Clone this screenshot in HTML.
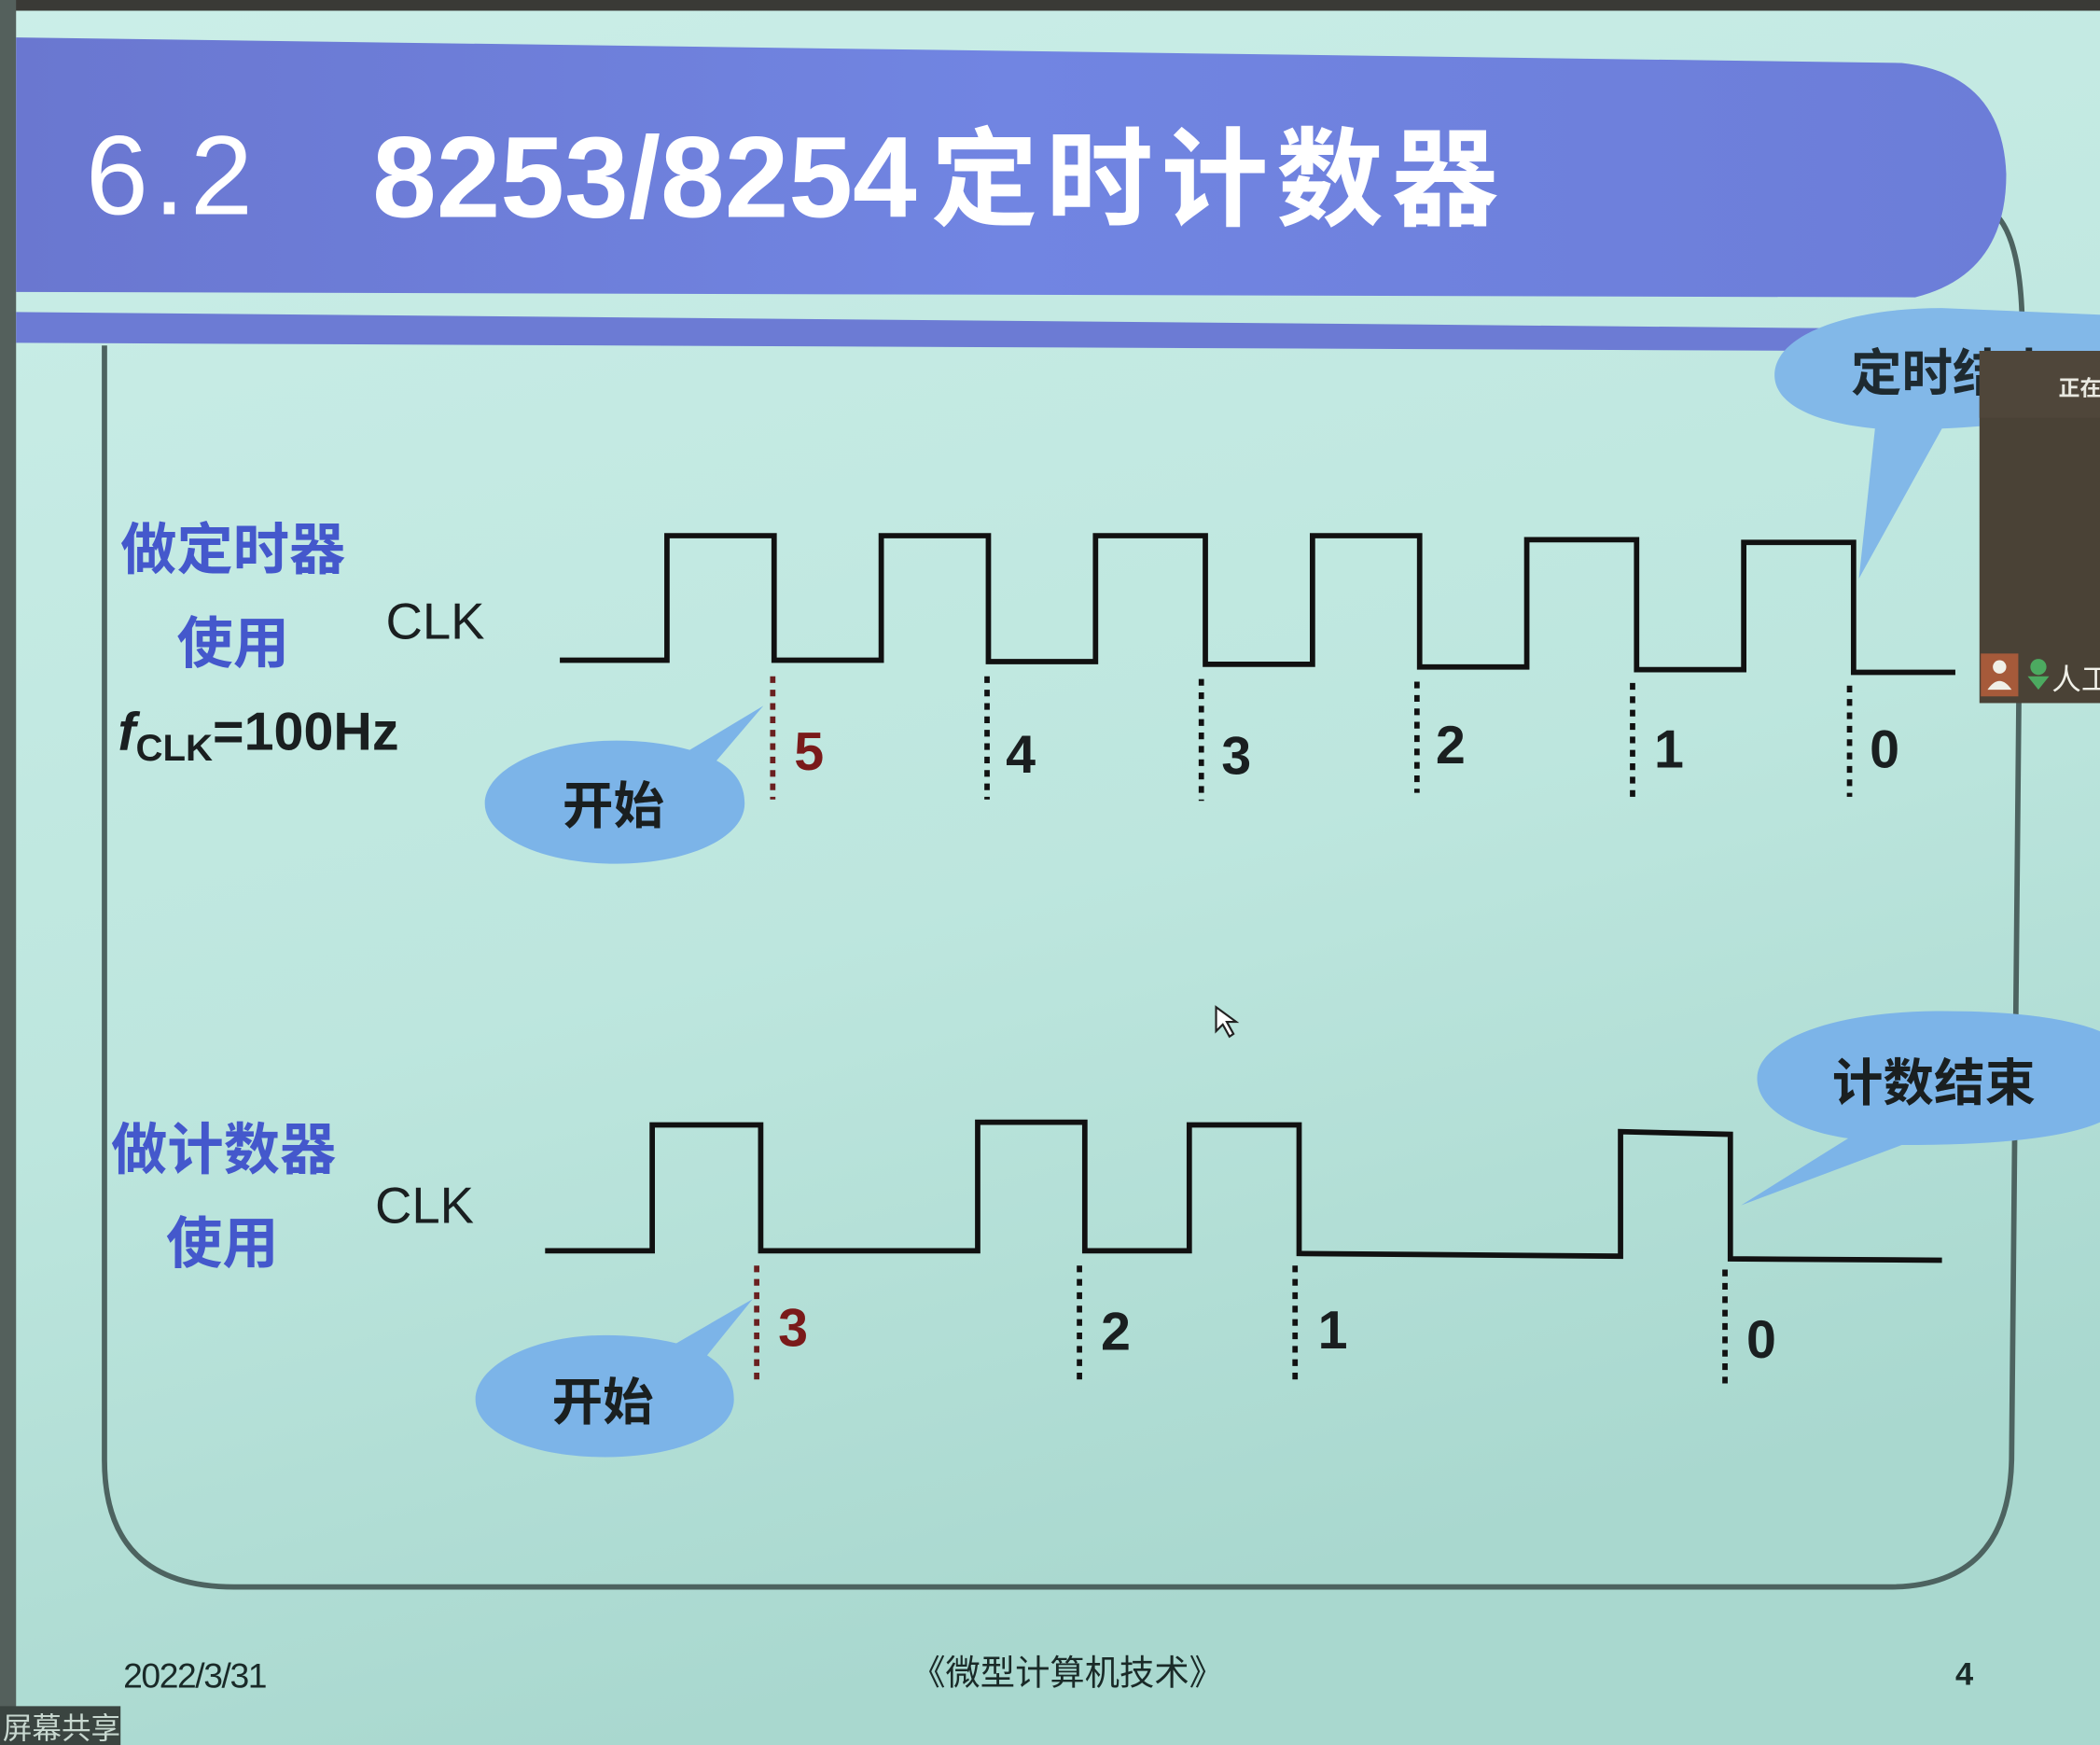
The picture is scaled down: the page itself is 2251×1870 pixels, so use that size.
<!DOCTYPE html>
<html><head><meta charset="utf-8"><style>
html,body{margin:0;padding:0;width:2251px;height:1870px;overflow:hidden;background:#c2e8e1}
svg{display:block}
text{font-family:"Liberation Sans","Noto Sans CJK SC",sans-serif}
</style></head><body>
<svg width="2251" height="1870" viewBox="0 0 1568 1303" preserveAspectRatio="none" xmlns="http://www.w3.org/2000/svg">
<defs>
<linearGradient id="bg" x1="0" y1="0" x2="0.3" y2="1">
<stop offset="0" stop-color="#cbeee8"/><stop offset="0.6" stop-color="#bde6de"/><stop offset="1" stop-color="#a9d8cf"/>
</linearGradient>
<linearGradient id="tb" x1="0" y1="0" x2="1" y2="0">
<stop offset="0" stop-color="#6a77d0"/><stop offset="0.5" stop-color="#7185e2"/><stop offset="1" stop-color="#6c7dd8"/>
</linearGradient>
</defs>
<rect width="1568" height="1303" fill="url(#bg)"/>
<rect x="0" y="0" width="1568" height="8" fill="#3a3a36"/>
<rect x="0" y="0" width="12" height="1303" fill="#54605c"/>
<path d="M78 258 L78 1090 Q78 1185 175 1185 L1410 1185 Q1500 1185 1502 1090 L1510 250 Q1510 180 1490 160" fill="none" stroke="#4d6360" stroke-width="4"/>
<path d="M12 28 L1420 47 Q1495 55 1498 130 Q1498 205 1430 222 L12 218 Z" fill="url(#tb)"/>
<path d="M12 233 L1360 245 L1360 262 L12 256 Z" fill="#6c7bd4"/>
<text x="64" y="160" font-family="Liberation Mono,monospace" font-size="84" fill="#fff" letter-spacing="4">6.2</text>
<text x="278" y="162" font-size="86" font-weight="bold" fill="#fff" letter-spacing="0">8253/8254</text>
<text x="695" y="162" font-size="80" fill="#fff" font-weight="bold" letter-spacing="6" font-family="Noto Sans CJK SC,sans-serif">定时计数器</text>
<path d="M1450 230 C1380 230 1325 250 1325 280 C1325 300 1350 315 1400 320 L1388 432 L1450 320 Q1568 315 1568 280 L1568 235 Z" fill="#82b8e8"/>
<text x="1382" y="292" font-size="38" font-weight="bold" fill="#1e2a30">定时结束</text>
<rect x="1478" y="262" width="90" height="263" fill="#4a4236"/>
<rect x="1478" y="262" width="90" height="50" fill="#4f463a"/>
<text x="1537" y="295" font-size="16" font-weight="bold" fill="#e8e8e0">正在</text>
<rect x="1479" y="488" width="28" height="32" fill="#a65a3a"/>
<circle cx="1493" cy="498" r="5" fill="#f0f0e8"/><path d="M1484 515 Q1493 502 1502 515 Z" fill="#f0f0e8"/>
<path d="M1514 505 L1530 505 L1522 515 Z" fill="#4caa60"/><circle cx="1522" cy="498" r="6" fill="#4caa60"/>
<text x="1532" y="515" font-size="22" fill="#f0f0e8">人工</text>
<text x="90" y="425" font-size="42" font-weight="bold" fill="#4458cc">做定时器</text>
<text x="132" y="495" font-size="42" font-weight="bold" fill="#4458cc">使用</text>
<text x="288" y="477" font-size="38" fill="#1a1f20">CLK</text>
<text x="88" y="560" font-size="40" font-weight="bold" fill="#1a1f20"><tspan font-style="italic">f</tspan><tspan font-size="28" dy="8">CLK</tspan><tspan dy="-8">=100Hz</tspan></text>
<polyline points="418,493 498,493 498,400 578,400 578,493 658,493 658,400 738,400 738,494 818,494 818,400 900,400 900,496 980,496 980,400 1060,400 1060,498 1140,498 1140,403 1222,403 1222,500 1302,500 1302,405 1384,405 1384,502 1460,502" fill="none" stroke="#111" stroke-width="4"/>
<g stroke="#111" stroke-width="4" stroke-dasharray="5 5">
<line x1="577" y1="505" x2="577" y2="597" stroke="#6a2020"/>
<line x1="737" y1="505" x2="737" y2="597"/><line x1="897" y1="507" x2="897" y2="598"/>
<line x1="1058" y1="509" x2="1058" y2="592"/><line x1="1219" y1="510" x2="1219" y2="595"/>
<line x1="1381" y1="512" x2="1381" y2="595"/>
</g>
<g font-size="40" font-weight="bold" fill="#1a1f20">
<text x="593" y="575" fill="#7a1a1a">5</text><text x="751" y="577">4</text><text x="912" y="578">3</text>
<text x="1072" y="570">2</text><text x="1235" y="573">1</text><text x="1396" y="573">0</text>
</g>
<path d="M460 553 C405 553 362 575 362 600 C362 625 405 645 460 645 C515 645 556 625 556 600 C556 585 548 575 535 568 L570 527 L515 560 Q490 553 460 553 Z" fill="#7cb4e8"/>
<text x="420" y="615" font-size="38" font-weight="bold" fill="#1a1f20">开始</text>
<path d="M908 752 L908 770 L913 765 L918 774 L921 772 L916 763 L923 763 Z" fill="#fff" stroke="#222" stroke-width="1.5"/>
<text x="83" y="873" font-size="42" font-weight="bold" fill="#4458cc">做计数器</text>
<text x="124" y="943" font-size="42" font-weight="bold" fill="#4458cc">使用</text>
<text x="280" y="913" font-size="38" fill="#1a1f20">CLK</text>
<polyline points="407,934 487,934 487,840 568,840 568,934 730,934 730,838 810,838 810,934 888,934 888,840 970,840 970,936 1210,938 1210,845 1292,847 1292,940 1450,941" fill="none" stroke="#111" stroke-width="4"/>
<g stroke="#111" stroke-width="4" stroke-dasharray="5 5">
<line x1="565" y1="945" x2="565" y2="1030" stroke="#6a2020"/>
<line x1="806" y1="945" x2="806" y2="1030"/><line x1="967" y1="945" x2="967" y2="1030"/>
<line x1="1288" y1="948" x2="1288" y2="1035"/>
</g>
<g font-size="40" font-weight="bold" fill="#1a1f20">
<text x="581" y="1005" fill="#7a1a1a">3</text><text x="822" y="1008">2</text><text x="984" y="1007">1</text><text x="1304" y="1014">0</text>
</g>
<path d="M452 997 C397 997 355 1020 355 1045 C355 1070 397 1088 452 1088 C507 1088 548 1070 548 1045 C548 1030 540 1020 528 1012 L562 970 L505 1003 Q480 997 452 997 Z" fill="#7cb4e8"/>
<text x="412" y="1060" font-size="38" font-weight="bold" fill="#1a1f20">开始</text>
<path d="M1450 755 C1360 755 1312 780 1312 805 C1312 830 1345 845 1380 850 L1300 900 L1420 855 Q1530 855 1568 838 L1568 770 Q1530 755 1450 755 Z" fill="#7cb4e8"/>
<text x="1368" y="822" font-size="38" font-weight="bold" fill="#1a1f20">计数结束</text>
<text x="92" y="1260" font-size="26" fill="#1a2a28" letter-spacing="-1">2022/3/31</text>
<text x="680" y="1258" font-size="26" fill="#1a2a28">《微型计算机技术》</text>
<text x="1460" y="1258" font-size="24" font-weight="bold" fill="#1a2a28">4</text>
<rect x="0" y="1274" width="90" height="29" fill="#3a4440"/>
<text x="2" y="1298" font-size="22" fill="#c8d8d0">屏幕共享</text>
</svg>
</body></html>
